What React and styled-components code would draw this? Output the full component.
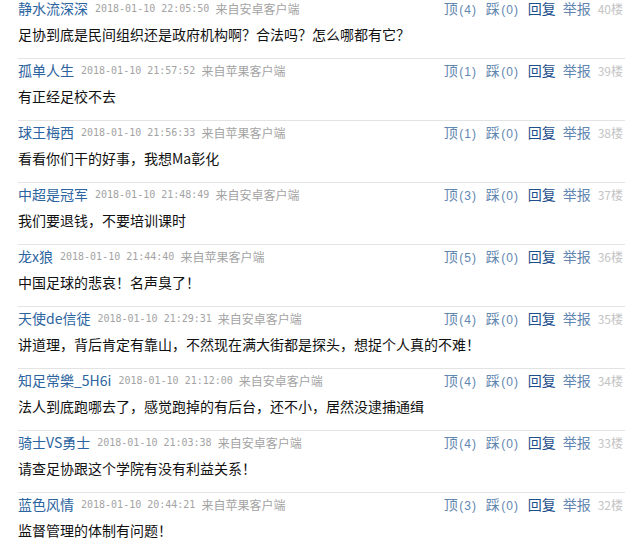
import styled, { createGlobalStyle } from 'styled-components';

const GlobalStyle = createGlobalStyle`
  body {
    margin: 0;
    background: #ffffff;
    font-family: "Liberation Sans", "Noto Sans CJK SC", sans-serif;
  }
`;

const comments = [
  { name: '静水流深深', time: '2018-01-10 22:05:50', from: '来自安卓客户端', text: '足协到底是民间组织还是政府机构啊？合法吗？怎么哪都有它？', up: 4, down: 0, floor: 40 },
  { name: '孤单人生', time: '2018-01-10 21:57:52', from: '来自苹果客户端', text: '有正经足校不去', up: 1, down: 0, floor: 39 },
  { name: '球王梅西', time: '2018-01-10 21:56:33', from: '来自苹果客户端', text: '看看你们干的好事，我想Ma彰化', up: 1, down: 0, floor: 38 },
  { name: '中超是冠军', time: '2018-01-10 21:48:49', from: '来自安卓客户端', text: '我们要退钱，不要培训课时', up: 3, down: 0, floor: 37 },
  { name: '龙x狼', time: '2018-01-10 21:44:40', from: '来自苹果客户端', text: '中国足球的悲哀！名声臭了！', up: 5, down: 0, floor: 36 },
  { name: '天使de信徒', time: '2018-01-10 21:29:31', from: '来自安卓客户端', text: '讲道理，背后肯定有靠山，不然现在满大街都是探头，想捉个人真的不难！', up: 4, down: 0, floor: 35 },
  { name: '知足常樂_5H6i', time: '2018-01-10 21:12:00', from: '来自安卓客户端', text: '法人到底跑哪去了，感觉跑掉的有后台，还不小，居然没逮捕通缉', up: 4, down: 0, floor: 34 },
  { name: '骑士VS勇士', time: '2018-01-10 21:03:38', from: '来自安卓客户端', text: '请查足协跟这个学院有没有利益关系！', up: 4, down: 0, floor: 33 },
  { name: '蓝色风情', time: '2018-01-10 20:44:21', from: '来自苹果客户端', text: '监督管理的体制有问题！', up: 3, down: 0, floor: 32 },
];

export default function App() {
  return (
    <>
      <GlobalStyle />
      <List>
        {comments.map((c) => (
          <Item key={c.floor}>
            <Head>
              <Meta>
                <Name>{c.name}</Name>
                <Time>{c.time}</Time>
                <From>{c.from}</From>
              </Meta>
              <Actions>
                <Vote>顶<Count>({c.up})</Count></Vote>
                <Vote>踩<Count>({c.down})</Count></Vote>
                <Reply>回复</Reply>
                <Vote>举报</Vote>
                <Floor>{c.floor}楼</Floor>
              </Actions>
            </Head>
            <Content>{c.text}</Content>
          </Item>
        ))}
      </List>
    </>
  );
}

const List = styled.ul`
  list-style: none;
  margin: -4px 0 0 18px;
  padding: 0;
  width: 607px;
`;

const Item = styled.li`
  border-top: 1px solid #e3e3e3;
  height: 61px;
`;

const Head = styled.div`
  display: flex;
  justify-content: space-between;
  align-items: center;
  height: 22px;
  padding-right: 2px;
`;

const Meta = styled.div`
  display: flex;
  align-items: center;
  white-space: nowrap;
`;

const Name = styled.a`
  font-family: "Noto Sans CJK SC", sans-serif;
  font-size: 14px;
  color: #2c64a0;
  margin-right: 7px;
`;

const Time = styled.span`
  font-family: "DejaVu Sans Mono", monospace;
  font-size: 10px;
  color: #a3a3a3;
  margin-right: 6px;
`;

const From = styled.span`
  font-family: "Noto Sans CJK SC", sans-serif;
  font-size: 12px;
  color: #a3a3a3;
`;

const Actions = styled.div`
  display: flex;
  align-items: center;
  gap: 7px;
  white-space: nowrap;
`;

const Vote = styled.a`
  font-family: "Noto Sans CJK SC", sans-serif;
  font-size: 14px;
  color: #5f86b0;
`;

const Count = styled.span`
  display: inline-block;
  width: 21px;
  text-align: center;
  font-family: "Liberation Sans", sans-serif;
  font-size: 12px;
  letter-spacing: 1px;
`;

const Reply = styled.a`
  font-family: "Noto Sans CJK SC", sans-serif;
  font-size: 14px;
  color: #1d4f8c;
`;

const Floor = styled.span`
  font-family: "Noto Sans CJK SC", sans-serif;
  font-size: 12px;
  color: #c4c4c4;
`;

const Content = styled.p`
  margin: 4px 0 0;
  font-family: "Noto Sans CJK SC", sans-serif;
  font-size: 14px;
  line-height: 22px;
  color: #111;
`;
